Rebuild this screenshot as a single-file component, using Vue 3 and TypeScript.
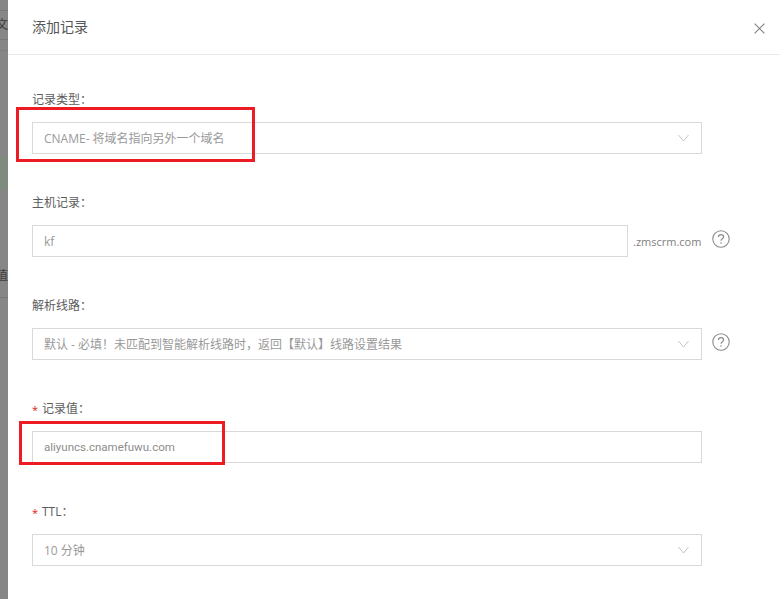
<script setup lang="ts">
interface Field {
  label: string
  required?: boolean
  value: string
  select?: boolean
  suffix?: string
  help?: boolean
  compact?: boolean
}

const fields: Field[] = [
  { label: '记录类型', value: 'CNAME- 将域名指向另外一个域名', select: true },
  { label: '主机记录', value: 'kf', suffix: '.zmscrm.com', help: true },
  { label: '解析线路', value: '默认 - 必填！未匹配到智能解析线路时，返回【默认】线路设置结果', select: true, help: true },
  { label: '记录值', required: true, value: 'aliyuncs.cnamefuwu.com', compact: true },
  { label: 'TTL', required: true, value: '10 分钟', select: true },
]
</script>

<template>
  <div class="page">
    <aside class="backdrop">
      <span class="bg-line l1"></span>
      <span class="bg-text t1">文</span>
      <span class="bg-line l2"></span>
      <span class="bg-line l4"></span>
      <span class="bg-green"></span>
      <span class="bg-text t2">值</span>
      <span class="bg-line l3"></span>
    </aside>
    <main class="modal">
      <header class="head">
        <h1 class="title">添加记录</h1>
        <svg class="close" width="11" height="11" viewBox="0 0 11 11">
          <path d="M0.6 0.6L10.4 10.4M10.4 0.6L0.6 10.4" stroke="#808080" stroke-width="1.1" fill="none" />
        </svg>
      </header>
      <form class="body">
        <div v-for="f in fields" :key="f.label" class="field">
          <label class="label">
            <span v-if="f.required" class="star">*</span>{{ f.label }}：
          </label>
          <div class="row">
            <div class="input" :class="{ short: f.suffix }">
              <span class="val" :class="{ compact: f.compact }">{{ f.value }}</span>
              <svg v-if="f.select" class="chev" width="11" height="8" viewBox="0 0 11 8">
                <path d="M0.5 1L5.5 7L10.5 1" stroke="#c4c4c4" stroke-width="1" fill="none" />
              </svg>
            </div>
            <span v-if="f.suffix" class="suffix">{{ f.suffix }}</span>
            <svg v-if="f.help" class="help" width="18" height="18" viewBox="0 0 18 18">
              <circle cx="9" cy="9" r="8.2" stroke="#8a8a8a" stroke-width="1.1" fill="none" />
              <path d="M6.4 7.1C6.4 5.6 7.6 4.7 9 4.7C10.5 4.7 11.6 5.6 11.6 6.9C11.6 8.6 9 8.8 9 10.8" stroke="#8a8a8a" stroke-width="1.2" fill="none" />
              <circle cx="9" cy="13" r="0.8" fill="#8a8a8a" />
            </svg>
          </div>
        </div>
      </form>
    </main>
    <div class="mark mark-a"></div>
    <div class="mark mark-b"></div>
  </div>
</template>

<style>
html, body { margin: 0; background: #fff; overflow: hidden; }
</style>

<style scoped>
.page {
  position: relative;
  display: flex;
  width: 780px;
  height: 599px;
  overflow: hidden;
  font-family: "Open Sans", "Noto Sans CJK SC", sans-serif;
}
.backdrop {
  position: relative;
  flex: 0 0 8px;
  background: #868686;
  overflow: hidden;
}
.bg-line { position: absolute; left: 0; width: 8px; height: 1px; background: #777; }
.l1 { top: 10px; }
.l2 { top: 39px; }
.l4 { top: 50px; background: #7f7f7f; }
.l3 { top: 297px; }
.bg-green { position: absolute; left: 0; top: 156px; width: 8px; height: 34px; background: #7f8b7f; }
.bg-text { position: absolute; right: 0; font-size: 12px; line-height: 16px; color: #3c3c3c; white-space: nowrap; }
.t1 { top: 17px; }
.t2 { top: 268px; }
.modal { flex: 1; min-width: 0; background: #fff; }
.head {
  display: flex;
  align-items: center;
  justify-content: space-between;
  height: 54px;
  padding: 0 15px 0 24px;
  border-bottom: 1px solid #e6ebef;
}
.title { margin: -2px 0 0; font-size: 14px; font-weight: 400; color: #555; }
.close { margin-top: 2px; }
.body { display: flex; flex-direction: column; gap: 38px; padding: 34px 0 0 24px; }
.field { display: flex; flex-direction: column; gap: 11px; }
.label { position: relative; height: 22px; line-height: 22px; font-size: 12px; color: #5c5c5c; }
.star { position: absolute; left: 0; top: 1px; color: #e02020; font-size: 11px; }
.field:nth-child(n+4) .label { padding-left: 10px; }
.row { display: flex; align-items: center; }
.input {
  box-sizing: border-box;
  display: flex;
  align-items: center;
  justify-content: space-between;
  width: 670px;
  height: 32px;
  padding: 0 12px 0 11px;
  border: 1px solid #d9d9d9;
  font-size: 12px;
  color: #999;
}
.input.short { width: 596px; }
.val { white-space: nowrap; }
.val.compact { font-family: Roboto, sans-serif; font-size: 11.5px; color: #8c8c8c; }
.chev { flex: none; }
.suffix { flex: 0 0 69px; margin-left: 5px; font-size: 11px; color: #808080; white-space: nowrap; }
.help { margin: -4px 0 0 10px; }
.mark { position: absolute; box-sizing: border-box; border: 3px solid #ed1c24; }
.mark-a { left: 16px; top: 107px; width: 239px; height: 55px; }
.mark-b { left: 19px; top: 421px; width: 206px; height: 44px; }
</style>
